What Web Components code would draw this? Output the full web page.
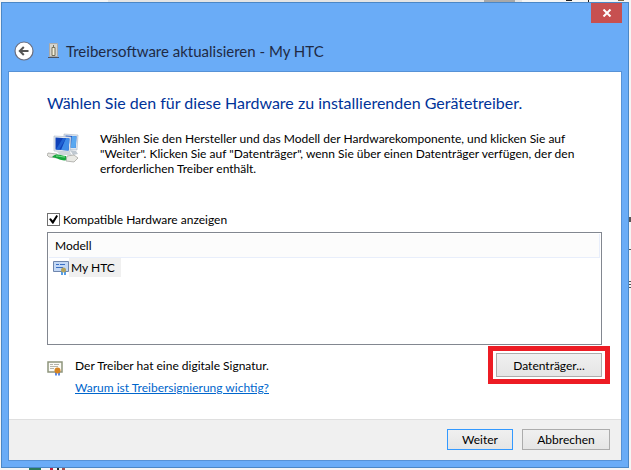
<!DOCTYPE html>
<html lang="de">
<head>
<meta charset="utf-8">
<title>Treibersoftware aktualisieren</title>
<style>
    body {
        margin: 0;
        min-height: 100vh;
        box-sizing: border-box;
        padding: 2px 2px 2px 1px;
        display: flex;
        /* edges of the windows behind the dialog */
        background:
            linear-gradient(#a8a8a8, #a8a8a8) 484px 0 / 31px 2px no-repeat,
            linear-gradient(#222, #222) 566px 0 / 6px 1px no-repeat,
            linear-gradient(#222, #222) 588px 0 / 1px 2px no-repeat,
            linear-gradient(#7b6a45, #7b6a45) 618px 0 / 6px 1px no-repeat,
            linear-gradient(#e4e4e4, #e4e4e4) 108px 0 / 414px 2px no-repeat,
            linear-gradient(#2a7a5c, #2a7a5c) 29px 100% / 12px 2px no-repeat,
            linear-gradient(90deg, #c8203c 3px, transparent 3px 7px, #222 7px 9px, transparent 9px 12px, #a8504c 12px) 50px 100% / 15px 2px no-repeat,
            linear-gradient(#555, #555) 100% 217px / 2px 5px no-repeat,
            linear-gradient(#555, #555) 100% 249px / 2px 1px no-repeat,
            linear-gradient(#555, #555) 100% 281px / 2px 1px no-repeat,
            linear-gradient(#555, #555) 100% 284px / 2px 1px no-repeat,
            linear-gradient(#555, #555) 100% 287px / 2px 1px no-repeat,
            #f5f5f5;
        font-family: Lato, "Open Sans", sans-serif;
        font-size: 12px;
        line-height: 15px;
        color: #000;
    }
    wizard-window {
        flex: 1;
        min-width: 0;
    }
</style>
</head>
<body>
<wizard-window>
    <span slot="title">Treibersoftware aktualisieren - My HTC</span>
    <driver-page>
        <span slot="heading">Wählen Sie den für diese Hardware zu installierenden Gerätetreiber.</span>
        <span slot="intro">Wählen Sie den Hersteller und das Modell der Hardwarekomponente, und klicken Sie auf<br>"Weiter". Klicken Sie auf "Datenträger", wenn Sie über einen Datenträger verfügen, der den<br>erforderlichen Treiber enthält.</span>
        <model-list slot="list" column="Modell" item="My HTC"></model-list>
        <signature-note slot="note"></signature-note>
        <push-button slot="note" marked>Datenträger...</push-button>
    </driver-page>
    <push-button slot="actions" primary>Weiter</push-button>
    <push-button slot="actions" wide>Abbrechen</push-button>
</wizard-window>

<script>
class WizardWindow extends HTMLElement {
    constructor() {
        super();
        this.attachShadow({ mode: 'open' });

        this.shadowRoot.innerHTML = `
            <style>
                :host {
                    display: flex;
                    flex-direction: column;
                    box-sizing: border-box;
                    padding: 0 6px 6px;
                    border: 1px solid #4b87c6;
                    background: #6aacf7;
                }
                header {
                    display: flex;
                    align-items: flex-start;
                    justify-content: space-between;
                }
                .caption {
                    display: flex;
                    align-items: center;
                    padding: 36px 0 8px 6px;
                }
                button {
                    padding: 0;
                    border: 0;
                    display: grid;
                    place-items: center;
                }
                .back {
                    width: 20px;
                    height: 24px;
                    background: none;
                }
                .device { margin: 0 7px 0 14px; }
                h1 {
                    margin: 0;
                    font-size: 15px;
                    line-height: 24px;
                    font-weight: normal;
                    color: #1f2a44;
                }
                .close {
                    width: 31px;
                    height: 20px;
                    background: #c75050;
                }
                .client {
                    flex: 1;
                    display: flex;
                    flex-direction: column;
                    border: 1px solid #5792d6;
                    background: #fff;
                }
                main { flex: 1; }
                footer {
                    display: flex;
                    justify-content: flex-end;
                    gap: 9px;
                    padding: 9px 11px 10px;
                    border-top: 1px solid #dfdfdf;
                    background: #f0f0f0;
                }
                svg { display: block; }
            </style>

            <header>
                <div class="caption">
                    <button class="back" aria-label="Zurück">
                        <svg width="20" height="20" viewBox="0 0 20 20">
                            <circle cx="10" cy="10" r="9" fill="#fff" stroke="#6b6f80" stroke-width="1.2"/>
                            <path d="M14.500 10H6.500M9.800 6L5.800 10l4 4" fill="none" stroke="#555" stroke-width="2"/>
                        </svg>
                    </button>
                    <svg class="device" width="11" height="16" viewBox="0 0 11 16">
                        <path d="M1.500 .500h8v13h-8z" fill="#d4d4cf" stroke="#aaa"/>
                        <path d="M4 4.500h3v8h-3z" fill="#f3f0dc" stroke="#77715a"/>
                        <path d="M5 3h1" stroke="#77715a" stroke-width="2"/>
                        <path d="M0 14.500h11" stroke="#4c5360"/>
                    </svg>
                    <h1><slot name="title"></slot></h1>
                </div>
                <button class="close" aria-label="Schließen">
                    <svg width="10" height="8" viewBox="0 0 10 8">
                        <path d="M1.500 .5l7 7M8.500 .5l-7 7" stroke="#fff" stroke-width="2"/>
                    </svg>
                </button>
            </header>
            <div class="client">
                <main><slot></slot></main>
                <footer><slot name="actions"></slot></footer>
            </div>
        `;
    }
}

class DriverPage extends HTMLElement {
    constructor() {
        super();
        this.attachShadow({ mode: 'open' });

        this.shadowRoot.innerHTML = `
            <style>
                :host {
                    display: block;
                    padding: 19px 19px 0 38px;
                }
                h2 {
                    margin: 0 0 16px;
                    font-size: 16px;
                    line-height: 24px;
                    font-weight: normal;
                    color: #003399;
                }
                .intro {
                    display: flex;
                    gap: 20px;
                    margin-bottom: 36px;
                }
                .intro svg { flex: none; }
                p {
                    margin: 0;
                    white-space: nowrap;
                }
                label {
                    display: flex;
                    align-items: center;
                    gap: 3px;
                    margin-bottom: 5px;
                }
                input {
                    appearance: none;
                    box-sizing: border-box;
                    width: 13px;
                    height: 13px;
                    margin: 0;
                    border: 1px solid #707070;
                    background: #fff;
                    display: grid;
                    place-items: center;
                }
                input:checked::after {
                    content: "";
                    width: 9px;
                    height: 9px;
                    background: #000;
                    clip-path: polygon(0 45%, 20% 35%, 42% 60%, 82% 0, 100% 10%, 48% 98%, 38% 98%);
                }
                .note {
                    display: flex;
                    justify-content: space-between;
                    align-items: flex-start;
                    padding-top: 8px;
                }
            </style>

            <h2><slot name="heading"></slot></h2>
            <div class="intro">
                <svg width="33" height="34" viewBox="0 -2 33 34">
                    <path d="M17 1l14 1-1 15-13-1z" fill="#dfe6ee" stroke="#a9b6c4" stroke-width=".6"/>
                    <path d="M18.500 2.500l11 .8-.8 11.700-10.200-.8z" fill="#1c55cc"/>
                    <path d="M25 3l4.500.3-.8 11.700-5-.2z" fill="#5aa8f0"/>
                    <path d="M7 3l17 1-1 15-16-1z" fill="#e6ebf0" stroke="#a9b6c4" stroke-width=".6"/>
                    <path d="M8.500 4.500l14 .9-.9 12-13.100-.9z" fill="#0f41b8"/>
                    <path d="M19 5l3.500.4-.9 12-7.600-.5z" fill="#3e8ce8"/>
                    <path d="M16 5l3 .2-7 11.500-3-.2z" fill="#1f62d2"/>
                    <path d="M10 19h13l2 3H13z" fill="#cfd6dc"/>
                    <path d="M23 17l6 1 2 3-5 1z" fill="#c0c9d1"/>
                    <path d="M1 20l9 1 1 4-9-1-2-2z" fill="#e4e4df" stroke="#9c9c98" stroke-width=".7"/>
                    <path d="M5 24c5-5 9-1 14-1l1 4c-5 1.500-8-1.500-15-3z" fill="#15a63c"/>
                    <path d="M9 23c4 0 6 1 9 1" stroke="#7de08f" fill="none"/>
                    <path d="M20 23l7-1 4 3-4 4-8-1z" fill="#e9e9e4" stroke="#9c9c98" stroke-width=".7"/>
                </svg>
                <p><slot name="intro"></slot></p>
            </div>
            <label><input type="checkbox" checked>Kompatible Hardware anzeigen</label>
            <slot name="list"></slot>
            <div class="note"><slot name="note"></slot></div>
        `;
    }
}

class ModelList extends HTMLElement {
    constructor() {
        super();
        this.attachShadow({ mode: 'open' });

        this.shadowRoot.innerHTML = `
            <style>
                :host {
                    display: block;
                    box-sizing: border-box;
                    height: 113px;
                    padding: 1px;
                    border: 1px solid #828790;
                }
                table {
                    width: 100%;
                    border-collapse: separate;
                    border-spacing: 0;
                }
                th {
                    height: 23px;
                    padding: 0 6px;
                    text-align: left;
                    font-weight: normal;
                    border: solid #e8eefb;
                    border-width: 0 1px 1px 0;
                    background: #fcfcfc;
                }
                td { padding: 0 4px; }
                .item {
                    display: flex;
                    align-items: center;
                }
                .item span {
                    padding: 2px 6px 2px 2px;
                    background: #f0f0f0;
                }
            </style>

            <table>
                <thead><tr><th scope="col">${this.getAttribute('column')}</th></tr></thead>
                <tbody><tr><td>
                    <div class="item">
                        <svg width="16" height="14" viewBox="0 0 16 14">
                            <path d="M.5.500h15v10H.5z" fill="#c3d8f5" stroke="#6f86ad"/>
                            <path d="M3 3.500h3m1 0h5M3 6.500h7" stroke="#3a6fc4"/>
                            <path d="M9 10v4m3-4v4" stroke="#1f7fe0" stroke-width="1.500"/>
                            <circle cx="10.500" cy="9" r="2.500" fill="#b3a25c"/>
                        </svg>
                        <span>${this.getAttribute('item')}</span>
                    </div>
                </td></tr></tbody>
            </table>
        `;
    }
}

class SignatureNote extends HTMLElement {
    constructor() {
        super();
        this.attachShadow({ mode: 'open' });

        this.shadowRoot.innerHTML = `
            <style>
                :host {
                    display: flex;
                    gap: 12px;
                    padding-top: 5px;
                }
                svg {
                    flex: none;
                    margin-top: 3px;
                }
                p { margin: 0 0 7px; }
                a { color: #0066cc; }
            </style>

            <svg width="16" height="15" viewBox="0 0 16 15">
                <path d="M1 1h14v10H1z" fill="#fbfbf6" stroke="#8f957c" stroke-width="1.500"/>
                <path d="M3 3.500h3m1 0h5M3 5.500h8M3 7.500h4" stroke="#b5b5ac"/>
                <path d="M9 11v3.500m3-3.500v3.500" stroke="#2a63d8" stroke-width="1.500"/>
                <circle cx="10.500" cy="9.500" r="3" fill="#d68421"/>
            </svg>
            <div>
                <p>Der Treiber hat eine digitale Signatur.</p>
                <a href="#">Warum ist Treibersignierung wichtig?</a>
            </div>
        `;
    }
}

class PushButton extends HTMLElement {
    constructor() {
        super();
        this.attachShadow({ mode: 'open' });

        this.shadowRoot.innerHTML = `
            <style>
                :host {
                    display: block;
                    position: relative;
                }
                button {
                    display: block;
                    min-width: 66px;
                    height: 21px;
                    padding: 0 14px;
                    border: 1px solid #acacac;
                    background: linear-gradient(#f0f0f0, #e5e5e5);
                    font: inherit;
                    line-height: 15px;
                    color: #000;
                }
                :host([primary]) button { border-color: #3399ff; }
                :host([wide]) button { min-width: 88px; }
                :host([marked]) button {
                    min-width: 106px;
                    height: 24px;
                }
                /* red frame drawn around the highlighted button */
                :host([marked])::after {
                    content: "";
                    position: absolute;
                    inset: -7px -8px;
                    border: 5px solid #ed1c24;
                    pointer-events: none;
                }
            </style>

            <button type="button"><slot></slot></button>
        `;
    }
}

customElements.define('wizard-window', WizardWindow);
customElements.define('driver-page', DriverPage);
customElements.define('model-list', ModelList);
customElements.define('signature-note', SignatureNote);
customElements.define('push-button', PushButton);
</script>
</body>
</html>
